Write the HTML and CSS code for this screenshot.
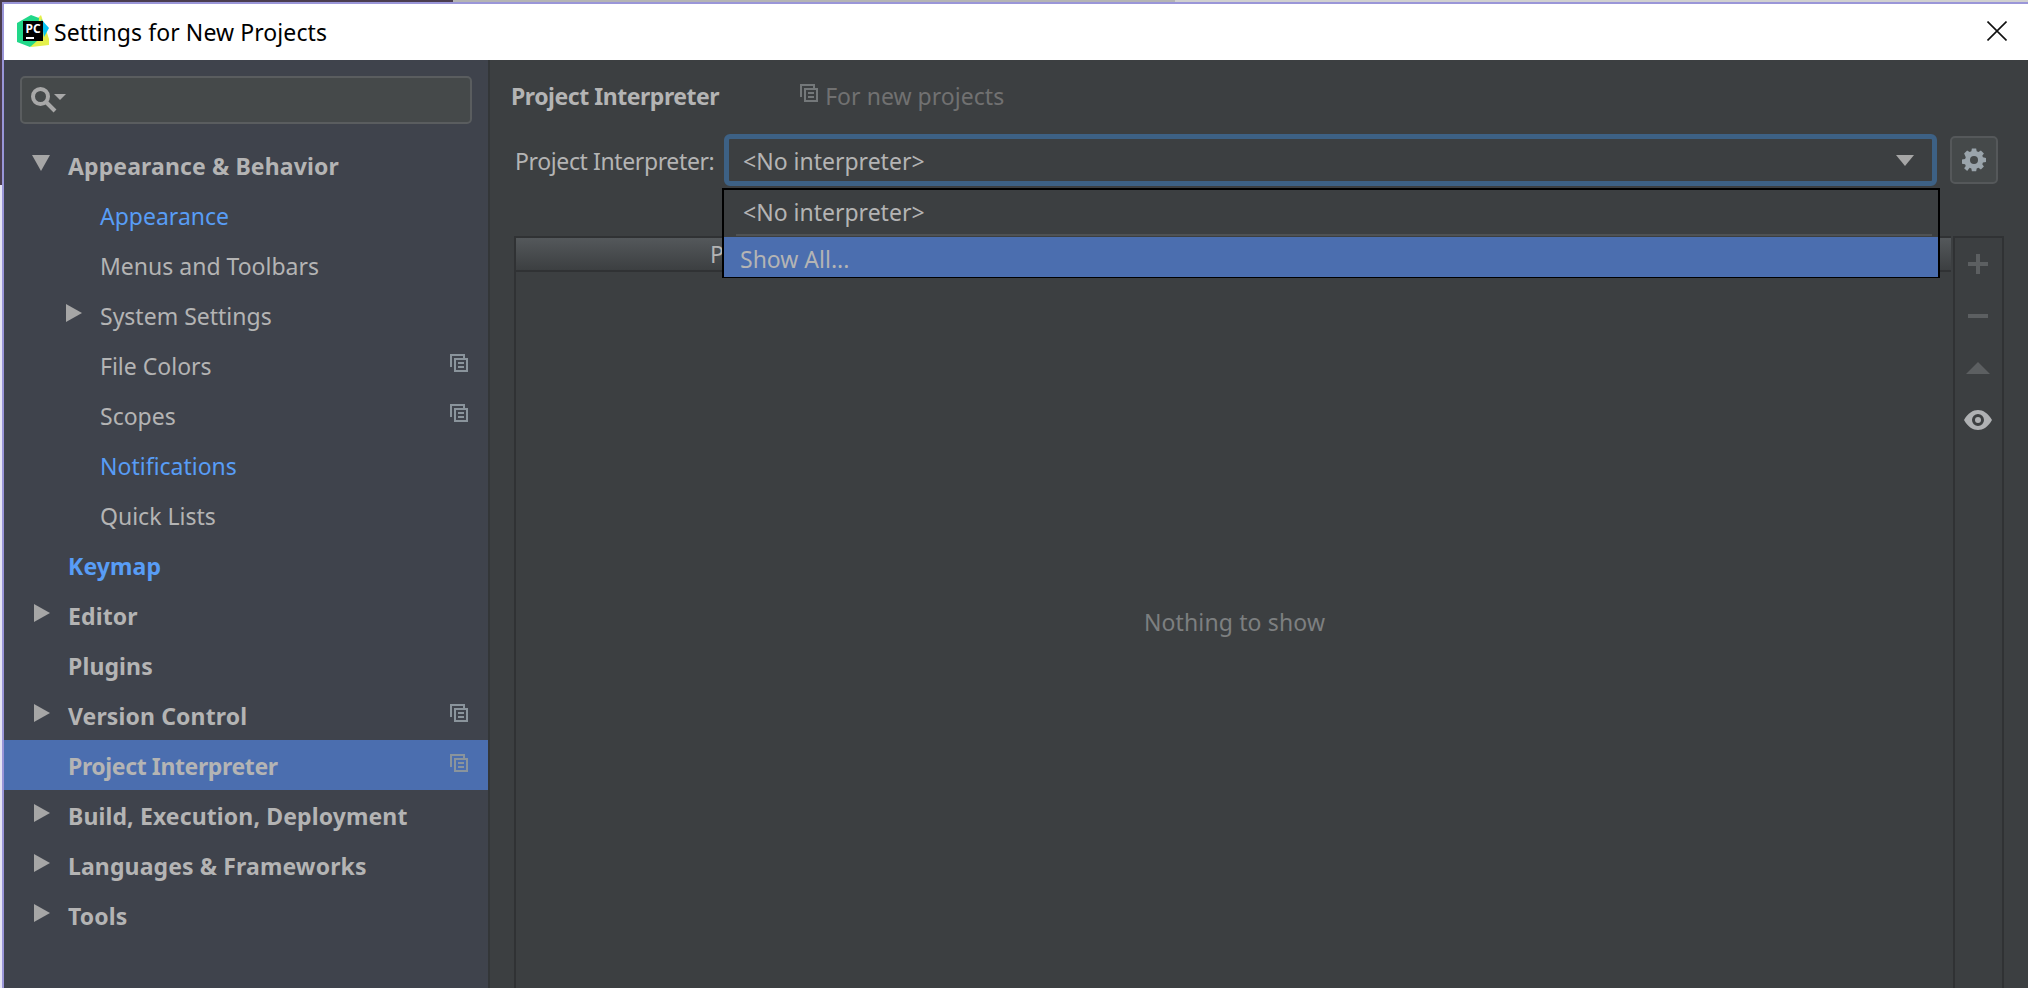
FILE: index.html
```html
<!DOCTYPE html>
<html>

<head>
  <title>Settings for New Projects</title>
  <link rel="stylesheet" href="styles.css">
</head>

<body>
  <svg width="0" height="0" class="defs">
    <symbol id="copy-icon" viewBox="0 0 18 18">
      <path d="M1 13V1h13v3" fill="none" stroke="currentColor" stroke-width="2" />
      <path d="M5 5h12v12H5z M8 9h6 M8 13h6" fill="none" stroke="currentColor" stroke-width="2" />
    </symbol>
  </svg>

  <div class="window">
    <!-- Title Bar -->
    <div class="titlebar">
      <svg class="logo" width="32" height="32" viewBox="0 0 32 32">
        <polygon points="20,4 24,0 32,24 32,30 14,32 10,20" fill="#e4f04c" />
        <polygon points="0,8 14,0 22,3 20,26 13,32 0,27" fill="#21d789" />
        <polygon points="24,4 32,13 27,22" fill="#07c3f2" />
        <rect x="6" y="6" width="20" height="20" fill="#000" />
        <text x="8.500" y="18" class="logo-text">PC</text>
        <rect x="9" y="22" width="8" height="2" fill="#fff" />
      </svg>
      <span class="title">Settings for New Projects</span>
      <svg class="close" width="20" height="20" viewBox="0 0 20 20">
        <path d="M0.5 0.5L19.5 19.5M19.5 0.5L0.5 19.5" stroke="#111" stroke-width="1.6" />
      </svg>
    </div>

    <div class="content">
      <!-- Settings Tree -->
      <div class="sidebar">
        <div class="search">
          <svg width="36" height="26" viewBox="0 0 36 26">
            <circle cx="9.500" cy="9.500" r="7.500" fill="none" stroke="#a8a8a8" stroke-width="4" />
            <path d="M15 15l9 9" stroke="#a8a8a8" stroke-width="4" />
            <polygon points="23,7 35,7 29,13" fill="#a8a8a8" />
          </svg>
        </div>
        <div class="tree">
          <div class="row top"><span class="arrow down"></span>Appearance &amp; Behavior</div>
          <div class="row sub link"><span class="arrow none"></span>Appearance</div>
          <div class="row sub"><span class="arrow none"></span>Menus and Toolbars</div>
          <div class="row sub"><span class="arrow right"></span>System Settings</div>
          <div class="row sub"><span class="arrow none"></span>File Colors<svg class="copy"><use href="#copy-icon" /></svg></div>
          <div class="row sub"><span class="arrow none"></span>Scopes<svg class="copy"><use href="#copy-icon" /></svg></div>
          <div class="row sub link"><span class="arrow none"></span>Notifications</div>
          <div class="row sub"><span class="arrow none"></span>Quick Lists</div>
          <div class="row top link"><span class="arrow none"></span>Keymap</div>
          <div class="row top"><span class="arrow right"></span>Editor</div>
          <div class="row top"><span class="arrow none"></span>Plugins</div>
          <div class="row top"><span class="arrow right"></span>Version Control<svg class="copy"><use href="#copy-icon" /></svg></div>
          <div class="row top selected"><span class="arrow none"></span>Project Interpreter<svg class="copy"><use href="#copy-icon" /></svg></div>
          <div class="row top"><span class="arrow right"></span>Build, Execution, Deployment</div>
          <div class="row top"><span class="arrow right"></span>Languages &amp; Frameworks</div>
          <div class="row top"><span class="arrow right"></span>Tools</div>
        </div>
      </div>

      <!-- Project Interpreter Panel -->
      <div class="panel">
        <div class="panel-head">
          <span class="panel-title">Project Interpreter</span>
          <svg class="copy head-copy"><use href="#copy-icon" /></svg>
          <span class="panel-note">For new projects</span>
        </div>

        <div class="interpreter">
          <span class="interpreter-label">Project Interpreter:</span>
          <div class="combo">
            <span>&lt;No interpreter&gt;</span>
            <span class="combo-arrow"></span>
          </div>
          <div class="gear-btn">
            <svg width="24" height="24" viewBox="0 0 24 24">
              <path fill="#9aa4ab" fill-rule="evenodd" d="M9.500 0h5l.6 3.300 2 .9L20 2.300 23.500 6l-1.900 2.800.8 2 3.600.7v5l-3.600.7-.8 2 1.900 2.800-3.500 3.500-2.900-1.900-2 .8-.6 3.400h-5l-.6-3.400-2-.8L4 27.500.5 24l1.900-2.800-.8-2-3.600-.7v-5l3.600-.7.800-2L.5 6 4 2.300l2.900 1.900 2-.9z" transform="translate(1.700 .5) scale(.86 .82)" />
              <circle cx="12" cy="12" r="4" fill="#45494a" />
            </svg>
          </div>

          <div class="popup">
            <div class="popup-item">&lt;No interpreter&gt;</div>
            <div class="popup-sep"></div>
            <div class="popup-item active">Show All...</div>
          </div>
        </div>

        <div class="table-wrap">
          <div class="table">
            <div class="table-head">
              <span>Package</span>
              <span>Version</span>
              <span>Latest</span>
            </div>
            <div class="table-empty">Nothing to show</div>
          </div>
          <div class="tools">
            <svg width="20" height="20" viewBox="0 0 20 20">
              <path d="M10 0v20M0 10h20" stroke="#5c5f61" stroke-width="4" />
            </svg>
            <svg width="20" height="20" viewBox="0 0 20 20">
              <path d="M0 10h20" stroke="#5c5f61" stroke-width="4" />
            </svg>
            <svg width="24" height="20" viewBox="0 0 24 20">
              <polygon points="12,4 24,16 0,16" fill="#5c5f61" />
            </svg>
            <svg width="28" height="20" viewBox="0 0 28 20">
              <path fill="#afb1b3" fill-rule="evenodd" d="M0 10C4 3 9 0 14 0s10 3 14 10c-4 7-9 10-14 10S4 17 0 10zm14 6a6 6 0 1 0 0-12 6 6 0 0 0 0 12z" />
              <circle cx="14" cy="10" r="3" fill="#afb1b3" />
            </svg>
          </div>
        </div>
      </div>
    </div>
  </div>
</body>

</html>
```
FILE: styles.css
```css
/* Global Styles */
html,
body {
  height: 100%;
  margin: 0;
}

/* Desktop showing behind the window edge */
body {
  background-color: #e6e4f2;
  background-image:
    linear-gradient(to right, #4a3d4e 453px, #b4b4b4 453px, #b4b4b4 1175px, #d0d0d0 1175px),
    linear-gradient(to bottom, #4a3d4e 185px, #e6e4f2 185px);
  background-size: 100% 2px, 2px 100%;
  background-repeat: no-repeat;
  font-family: "Noto Sans", Arial, sans-serif;
  font-size: 23px;
  overflow: hidden;
}

.defs {
  display: block;
}

.window {
  display: flex;
  flex-direction: column;
  box-sizing: border-box;
  height: 986px;
  margin: 2px 0 0 2px;
  border-top: 2px solid #9a96d8;
  border-left: 2px solid #9a96d8;
}

/* Title Bar CSS */
.titlebar {
  display: flex;
  align-items: center;
  flex: none;
  height: 56px;
  padding: 0 21px 0 13px;
  background-color: #FFFFFF;
  color: #000;
}

.logo {
  flex: none;
  margin-top: -2px;
}

.logo-text {
  fill: #fff;
  font-size: 12px;
  font-weight: bold;
}

.title {
  flex: 1;
  margin-left: 5px;
  letter-spacing: 0.08px;
}

.close {
  margin-top: -2px;
}

/* Layout */
.content {
  display: flex;
  flex: 1;
  min-height: 0;
}

/* Sidebar CSS */
.sidebar {
  flex: none;
  width: 484px;
  padding-top: 16px;
  background-color: #3f434c;
  border-right: 2px solid #333638;
  color: #b4b4b4;
}

.search {
  display: flex;
  align-items: center;
  box-sizing: border-box;
  height: 48px;
  margin: 0 16px;
  padding: 0 9px;
  background-color: #45494a;
  border: 2px solid #5a5d5f;
  border-radius: 5px;
}

.tree {
  margin-top: 16px;
}

.row {
  display: flex;
  align-items: center;
  height: 50px;
  padding-top: 2px;
  box-sizing: border-box;
  white-space: nowrap;
}

.row.top {
  padding-left: 27px;
  font-weight: bold;
  letter-spacing: 0.12px;
}

.row.sub {
  padding-left: 59px;
}

.row.link {
  color: #589df6;
}

.row.selected {
  background-color: #4b6eaf;
  letter-spacing: -0.38px;
}

.arrow {
  flex: none;
  width: 0;
  height: 0;
  margin-top: -6px;
}

.arrow.none {
  margin-right: 37px;
}

.arrow.right {
  margin-left: 3px;
  margin-right: 18px;
  border-top: 9px solid transparent;
  border-bottom: 9px solid transparent;
  border-left: 16px solid #a6a6a6;
}

.arrow.down {
  margin-left: 1px;
  margin-right: 18px;
  border-left: 9px solid transparent;
  border-right: 9px solid transparent;
  border-top: 16px solid #a6a6a6;
}

.copy {
  flex: none;
  width: 18px;
  height: 18px;
  margin-left: auto;
  margin-right: 20px;
  margin-top: -6px;
  color: #8a949c;
}

/* Panel CSS */
.panel {
  display: flex;
  flex: 1;
  flex-direction: column;
  min-width: 0;
  background-color: #3c3f41;
}

.panel-head {
  display: flex;
  align-items: center;
  height: 36px;
  margin-top: 18px;
  padding-left: 21px;
}

.panel-title {
  color: #b4b4b4;
  font-weight: bold;
  letter-spacing: -0.46px;
}

.head-copy {
  margin-left: 81px;
  margin-right: 7px;
  color: #74787a;
}

.panel-note {
  color: #717171;
  letter-spacing: 0.04px;
}

.interpreter {
  display: flex;
  align-items: center;
  position: relative;
  height: 52px;
  margin-top: 20px;
  padding-left: 25px;
  color: #b4b4b4;
}

.interpreter-label {
  flex: none;
  width: 209px;
  padding-top: 2px;
  letter-spacing: -0.38px;
}

.combo {
  display: flex;
  align-items: center;
  justify-content: space-between;
  box-sizing: border-box;
  width: 1213px;
  height: 52px;
  padding: 2px 18px 0 14px;
  border: 5px solid #3d6185;
  border-radius: 6px;
}

.combo-arrow {
  width: 0;
  height: 0;
  margin-top: -2px;
  border-left: 9px solid transparent;
  border-right: 9px solid transparent;
  border-top: 11px solid #a6a6a6;
}

.gear-btn {
  display: flex;
  align-items: center;
  justify-content: center;
  box-sizing: border-box;
  width: 48px;
  height: 48px;
  margin-left: 13px;
  background-color: #45494a;
  border: 2px solid #55585a;
  border-radius: 5px;
}

.popup {
  position: absolute;
  top: 54px;
  left: 232px;
  box-sizing: border-box;
  width: 1218px;
  height: 90px;
  background-color: #3c3f41;
  border: 2px solid #000;
  z-index: 2;
}

.popup-item {
  display: flex;
  align-items: center;
  height: 44px;
  padding-left: 19px;
}

.popup-sep {
  height: 2px;
  margin: 0 6px 0 12px;
  background-color: #4f5254;
}

.popup-item.active {
  height: 40px;
  margin-top: 1px;
  padding-top: 3px;
  padding-left: 16px;
  box-sizing: border-box;
  background-color: #4b6eaf;
}

/* Table CSS */
.table-wrap {
  display: flex;
  flex: 1;
  min-height: 0;
  margin-top: 50px;
  padding-left: 24px;
}

.table {
  display: flex;
  flex: none;
  flex-direction: column;
  box-sizing: border-box;
  width: 1439px;
  border-left: 2px solid #303234;
}

.table-head {
  display: grid;
  grid-template-columns: repeat(3, 1fr);
  flex: none;
  height: 36px;
  margin-right: 2px;
  background: linear-gradient(#54585b, #3c3f41);
  border-top: 2px solid #303234;
  border-bottom: 2px solid #303234;
  box-sizing: border-box;
  color: #b4b4b4;
  text-align: center;
}

.table-empty {
  display: flex;
  flex: 1;
  align-items: center;
  justify-content: center;
  padding-bottom: 16px;
  color: #7d7f80;
  letter-spacing: 0.14px;
}

.tools {
  display: flex;
  flex: none;
  flex-direction: column;
  align-items: center;
  gap: 32px;
  box-sizing: border-box;
  width: 51px;
  padding: 16px 1px 0 0;
  border: 2px solid #303234;
  border-bottom: none;
}
```
